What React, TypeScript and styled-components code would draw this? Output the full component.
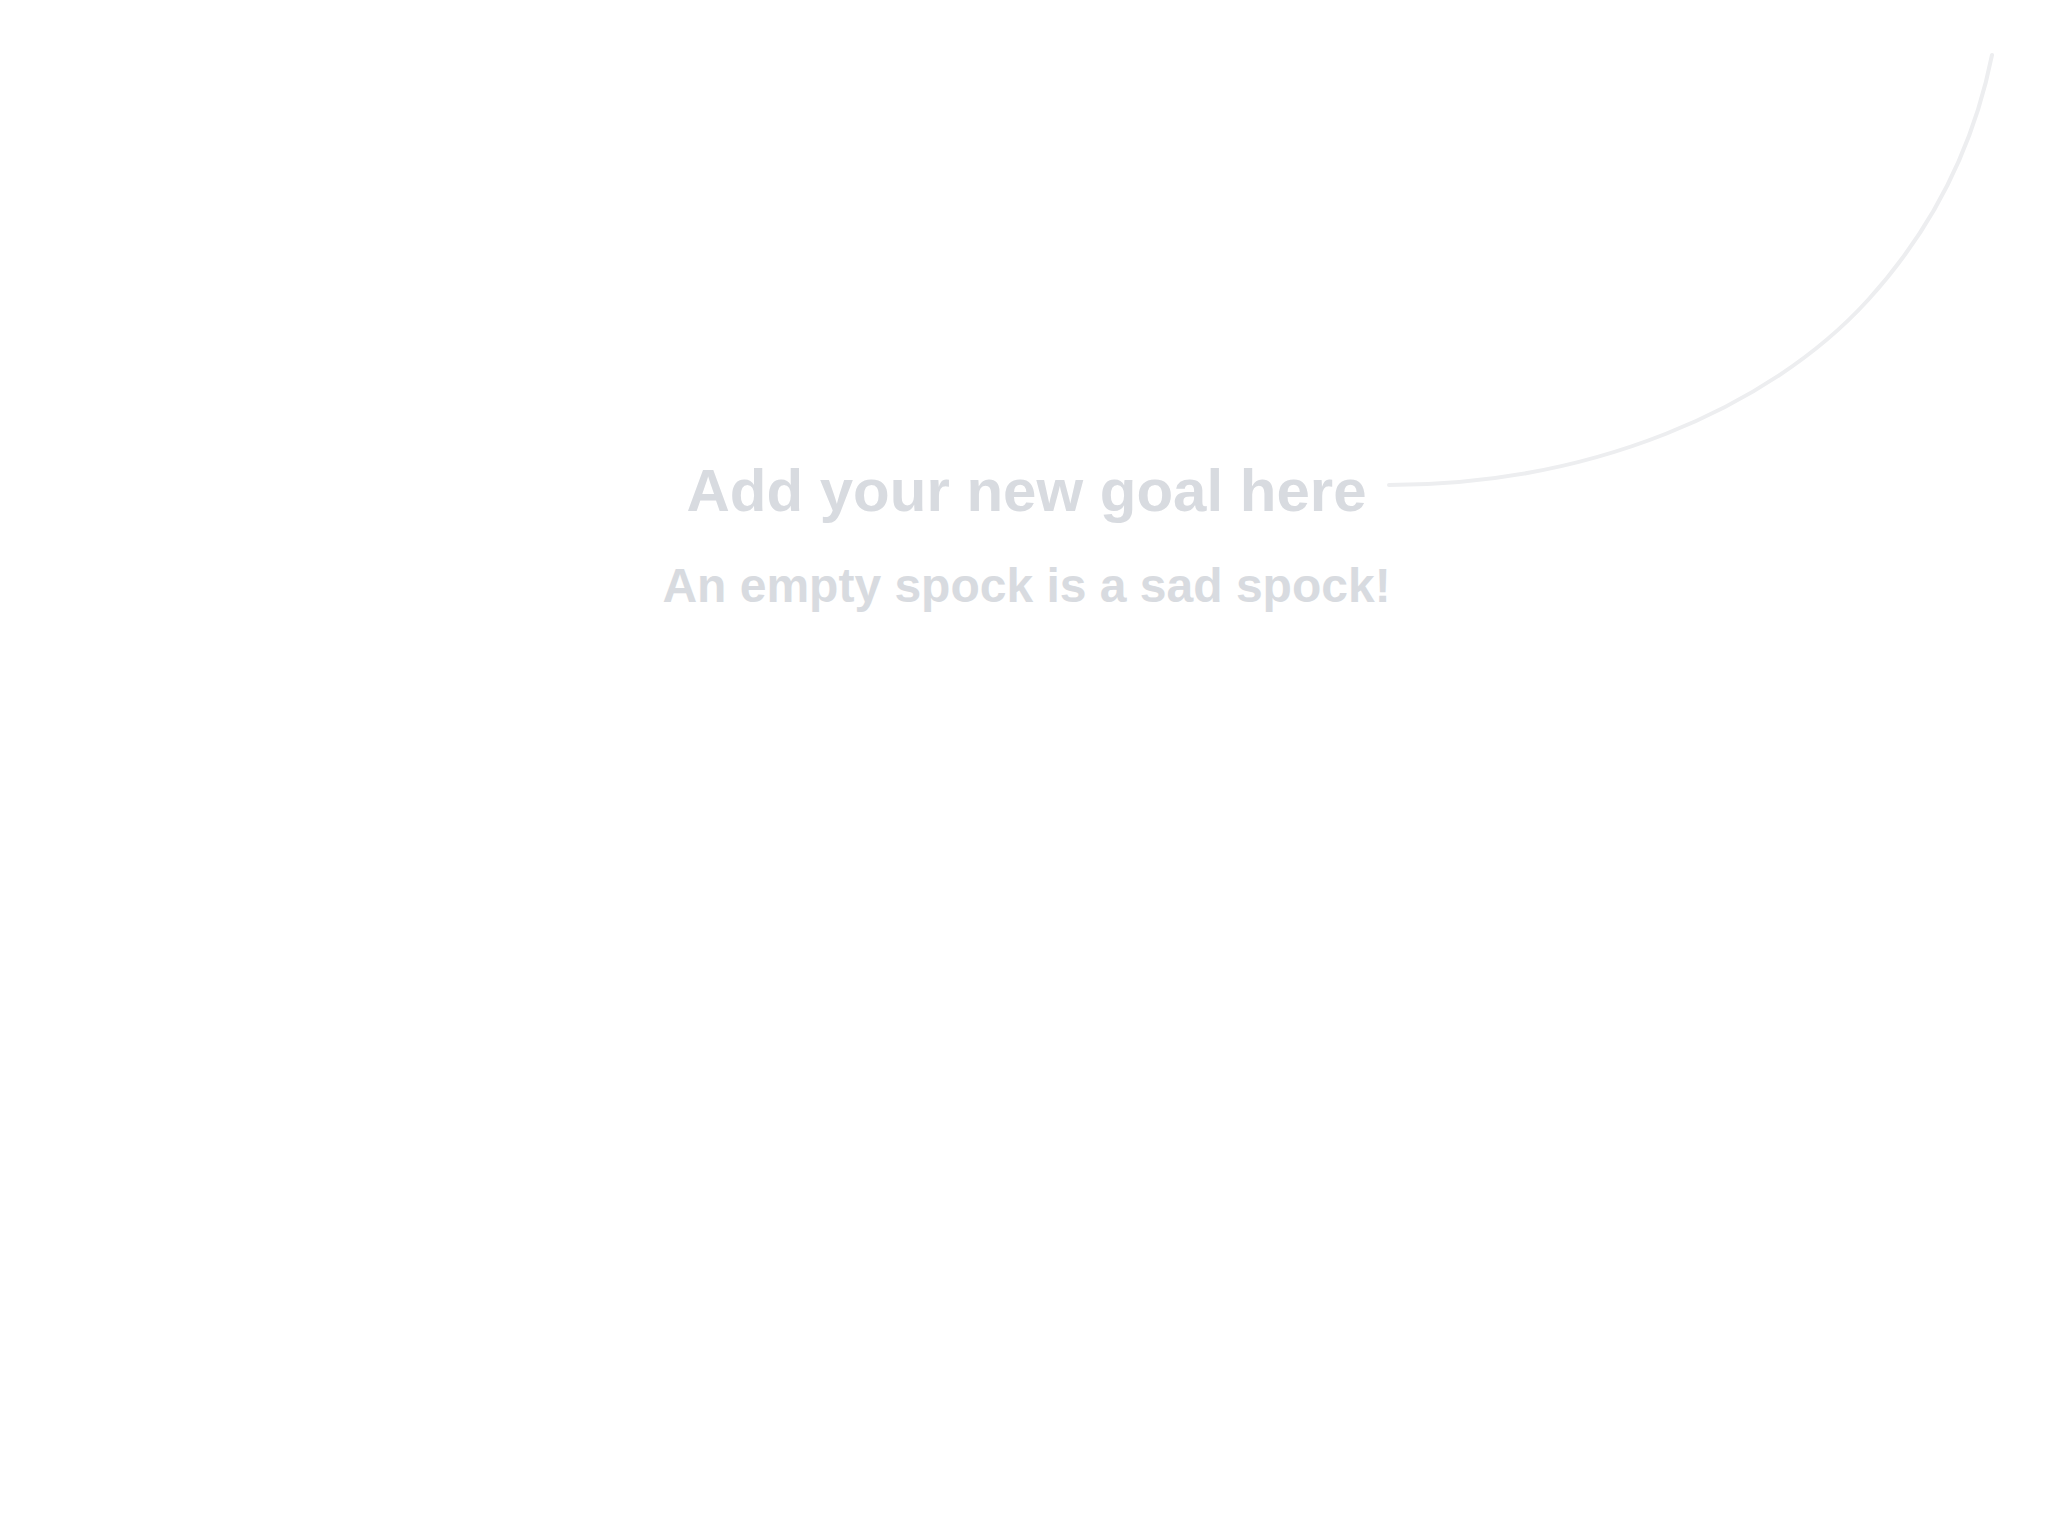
import styled, { createGlobalStyle } from "styled-components";

const GlobalStyle = createGlobalStyle`
    html, body {
        margin: 0;
        padding: 0;
        background: #ffffff;
    }
    body {
        font-family: "Liberation Sans", Arial, sans-serif;
    }
`;

const Page = styled.div`
    position: relative;
    width: 2048px;
    height: 1536px;
    overflow: hidden;
    display: flex;
    flex-direction: column;
    align-items: center;
    padding-top: 461px;
    box-sizing: border-box;
`;

const EmptyState = styled.div`
    display: flex;
    flex-direction: column;
    align-items: center;
    gap: 41px;
    padding-left: 5px;
`;

const Title = styled.h1`
    margin: 0;
    font-size: 60px;
    line-height: 1;
    font-weight: 700;
    color: #d8dbe0;
    white-space: nowrap;
`;

const Subtitle = styled.h2`
    margin: 0;
    font-size: 48px;
    line-height: 1;
    font-weight: 700;
    color: #d8dbe0;
    white-space: nowrap;
`;

// the hint arrow pointing at the add button in the corner
const HintCurve = styled.svg`
    position: absolute;
    top: 0;
    left: 0;
    pointer-events: none;
`;

function App() {
    return (
        <>
            <GlobalStyle />
            <Page>
                <EmptyState>
                    <Title>Add your new goal here</Title>
                    <Subtitle>An empty spock is a sad spock!</Subtitle>
                </EmptyState>
                <HintCurve width="2048" height="1536" viewBox="0 0 2048 1536">
                    <path
                        d="M1389 485 C1589 485 1768 410 1868 300 C1928 234 1972 155 1992 55"
                        fill="none"
                        stroke="#edeef0"
                        strokeWidth="4"
                        strokeLinecap="round"
                    />
                </HintCurve>
            </Page>
        </>
    );
}

export default App;
